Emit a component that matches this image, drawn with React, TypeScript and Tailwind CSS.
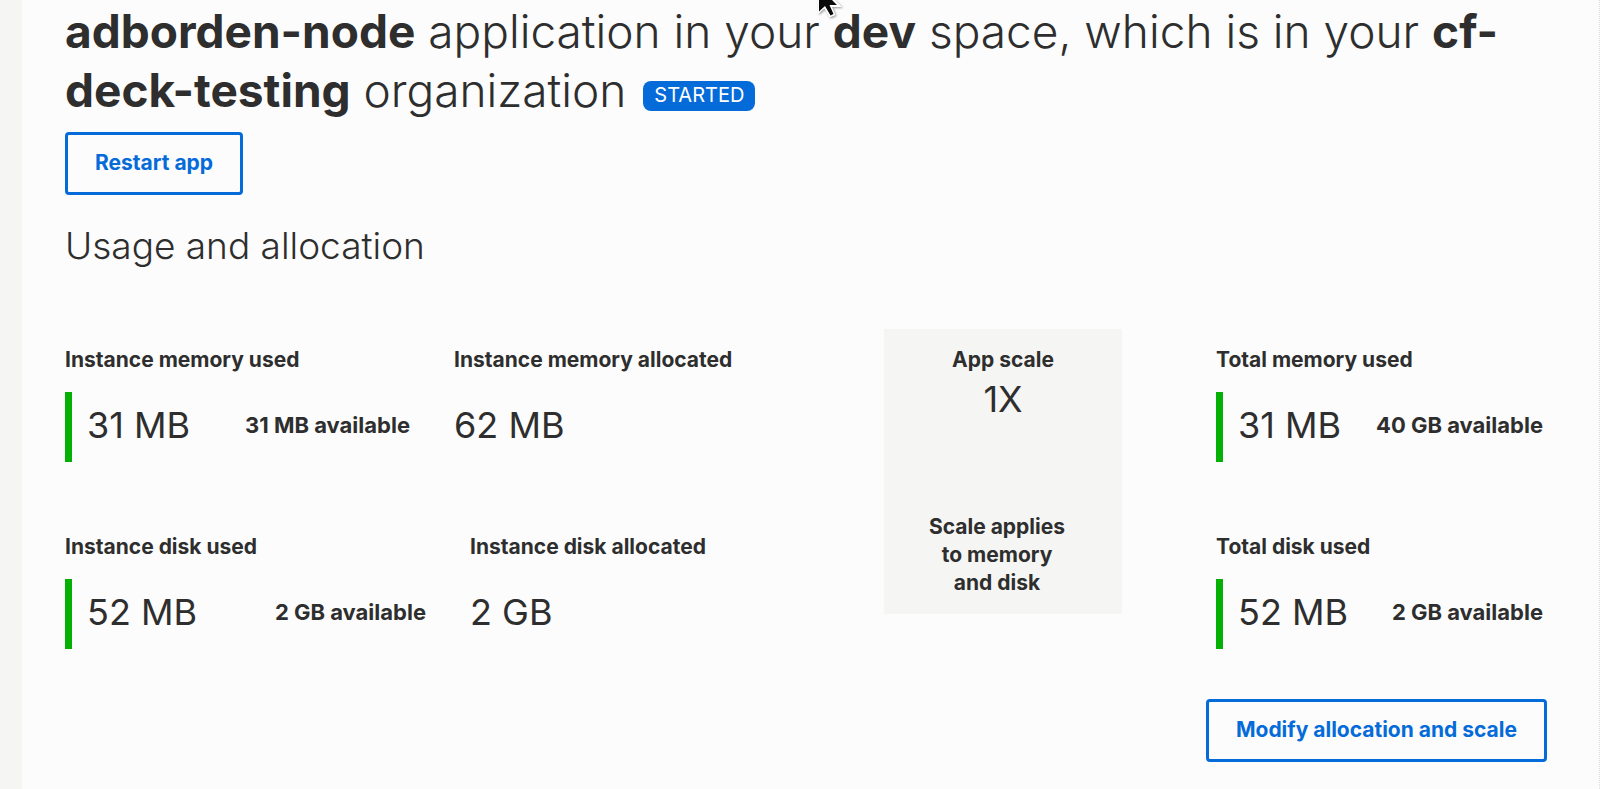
import type { ReactNode } from "react";

function OutlineButton({ children }: { children: ReactNode }) {
  return (
    <button
      type="button"
      className="h-[63px] cursor-pointer rounded-sm border-3 border-[#046bd9] px-[27px] pb-px text-[21px] leading-7 font-bold whitespace-nowrap text-[#046bd9]"
    >
      {children}
    </button>
  );
}

function Label({ children }: { children: ReactNode }) {
  return <h3 className="text-[21px] leading-7 font-bold whitespace-nowrap">{children}</h3>;
}

function UsageMetric({ label, used, available }: { label: string; used: string; available: string }) {
  return (
    <div>
      <Label>{label}</Label>
      <div className="mt-[18px] flex h-[70px] items-center justify-between border-l-7 border-[#04b004] pb-1 pl-[15px] whitespace-nowrap">
        <span className="text-[36px] leading-10">{used}</span>
        <span className="text-[22px] leading-7 font-bold">{available}</span>
      </div>
    </div>
  );
}

function AllocatedMetric({ label, value }: { label: string; value: string }) {
  return (
    <div>
      <Label>{label}</Label>
      <div className="mt-[18px] flex h-[70px] items-center pb-1 text-[36px] leading-10 whitespace-nowrap">
        {value}
      </div>
    </div>
  );
}

function Pointer() {
  return (
    <svg
      className="absolute top-0 left-[818px] drop-shadow-[1px_1px_1px_rgba(0,0,0,0.4)]"
      width="26"
      height="20"
      viewBox="0 0 26 20"
      aria-hidden="true"
    >
      <path d="M0 0V14L6.5 8.5L11.5 17.5L17.5 15L14 7H24L17 0Z" fill="#fff" />
      <path d="M1 0V11.5L7 6L12.5 15.5L15.5 14L11.5 5H19L14 0Z" fill="#0a0a0a" />
    </svg>
  );
}

export default function App() {
  return (
    <div className="relative flex min-h-screen overflow-hidden bg-[#fcfcfc] font-['Inter',sans-serif] text-[#2e2e2e]">
      <div className="w-[22px] shrink-0 bg-[#f5f5f3]" />
      <main className="min-w-0 flex-1 border-r border-dotted border-[#dedede] pr-[52px] pl-[43px]">
        <h1 className="pt-0.5 text-[46px] leading-[59px] font-light">
          <strong className="font-bold">adborden-node</strong> application in your{" "}
          <strong className="font-bold">dev</strong> space, which is in your{" "}
          <strong className="font-bold">cf-</strong>
          <wbr />
          <strong className="font-bold">deck-testing</strong> organization{" "}
          <span className="ml-1 inline-block rounded-lg bg-[#046bd9] px-[11px] pb-0.5 align-[5px] text-[20px] leading-7 font-normal text-white">
            STARTED
          </span>
        </h1>
        <div className="mt-3">
          <OutlineButton>Restart app</OutlineButton>
        </div>
        <h2 className="mt-[27px] text-[37px] leading-12 font-light">Usage and allocation</h2>
        <div className="mt-[59px] grid grid-cols-[819fr_332fr_331fr]">
          <section className="flex flex-col gap-[71px] pt-[17px]">
            <div className="grid grid-cols-[345px_1fr] gap-11">
              <UsageMetric label="Instance memory used" used="31 MB" available="31 MB available" />
              <AllocatedMetric label="Instance memory allocated" value="62 MB" />
            </div>
            <div className="grid grid-cols-[361px_1fr] gap-11">
              <UsageMetric label="Instance disk used" used="52 MB" available="2 GB available" />
              <AllocatedMetric label="Instance disk allocated" value="2 GB" />
            </div>
          </section>
          <section className="mr-[94px] flex h-[285px] flex-col items-center justify-between bg-[#f5f5f3] py-[17px] text-center">
            <div>
              <Label>App scale</Label>
              <div className="mt-px text-[36px] leading-12">1X</div>
            </div>
            <p className="mr-3 w-[145px] text-[21px] leading-7 font-bold">Scale applies to memory and disk</p>
          </section>
          <section className="flex flex-col gap-[71px] pt-[17px] pr-1">
            <UsageMetric label="Total memory used" used="31 MB" available="40 GB available" />
            <UsageMetric label="Total disk used" used="52 MB" available="2 GB available" />
          </section>
        </div>
        <div className="mt-[50px] flex justify-end">
          <OutlineButton>Modify allocation and scale</OutlineButton>
        </div>
      </main>
      <Pointer />
    </div>
  );
}
